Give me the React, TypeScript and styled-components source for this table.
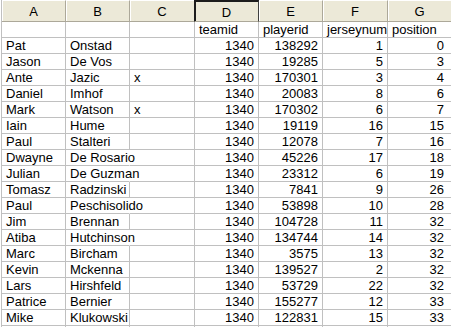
import React from 'react';
import styled, {createGlobalStyle, css} from 'styled-components';

type Align = 'left' | 'right';

interface IColumn {
    key: string,
    width: number,
    padRight: number
}

// widths measured off the grid lines, G sits a bit further in
const COLUMNS: IColumn[] = [
    {key: 'A', width: 64, padRight: 4},
    {key: 'B', width: 64, padRight: 4},
    {key: 'C', width: 65, padRight: 4},
    {key: 'D', width: 64, padRight: 4},
    {key: 'E', width: 64, padRight: 4},
    {key: 'F', width: 65, padRight: 4},
    {key: 'G', width: 64, padRight: 7},
];

const SELECTED_COLUMN = 'D';
const PAD_LEFT = 4;
const FONT = '13px "Liberation Sans", Arial, sans-serif';

const LABELS = ['', '', '', 'teamid', 'playerid', 'jerseynum', 'position'];

const ROWS: (string | number)[][] = [
    ['Pat', 'Onstad', '', 1340, 138292, 1, 0],
    ['Jason', 'De Vos', '', 1340, 19285, 5, 3],
    ['Ante', 'Jazic', 'x', 1340, 170301, 3, 4],
    ['Daniel', 'Imhof', '', 1340, 20083, 8, 6],
    ['Mark', 'Watson', 'x', 1340, 170302, 6, 7],
    ['Iain', 'Hume', '', 1340, 19119, 16, 15],
    ['Paul', 'Stalteri', '', 1340, 12078, 7, 16],
    ['Dwayne', 'De Rosario', '', 1340, 45226, 17, 18],
    ['Julian', 'De Guzman', '', 1340, 23312, 6, 19],
    ['Tomasz', 'Radzinski', '', 1340, 7841, 9, 26],
    ['Paul', 'Peschisolido', '', 1340, 53898, 10, 28],
    ['Jim', 'Brennan', '', 1340, 104728, 11, 32],
    ['Atiba', 'Hutchinson', '', 1340, 134744, 14, 32],
    ['Marc', 'Bircham', '', 1340, 3575, 13, 32],
    ['Kevin', 'Mckenna', '', 1340, 139527, 2, 32],
    ['Lars', 'Hirshfeld', '', 1340, 53729, 22, 32],
    ['Patrice', 'Bernier', '', 1340, 155277, 12, 33],
    ['Mike', 'Klukowski', '', 1340, 122831, 15, 33],
];

let measureCtx: CanvasRenderingContext2D | null = null

const textWidth = (text: string) => {
    if (!measureCtx) {
        measureCtx = document.createElement('canvas').getContext('2d')
    }
    if (!measureCtx) return text.length * 7
    measureCtx.font = FONT
    return measureCtx.measureText(text).width
}

// text spills over into the next cell when that one is empty, like excel
const spills = (row: (string | number)[], i: number) => {
    const value = row[i]
    if (typeof value !== 'string' || !value) return false
    const next = row[i + 1]
    if (next !== '' || i === row.length - 1) return false
    return textWidth(value) + PAD_LEFT > COLUMNS[i].width - 1
}

const App: React.FC = () => {
    const template = COLUMNS.map(c => `${c.width}px`).join(' ')

    const renderRow = (row: (string | number)[], r: string) => row.map((value, i) => {
        const col = COLUMNS[i]
        const align: Align = typeof value === 'number' ? 'right' : 'left'
        return <Cell key={`${r}-${col.key}`} $align={align} $padRight={col.padRight} $spill={spills(row, i)}>
            {value}
        </Cell>
    })

    return <>
        <GlobalStyle/>
        <Sheet style={{gridTemplateColumns: template}}>
            {COLUMNS.map(col => (
                <ColumnHeader key={col.key} $selected={col.key === SELECTED_COLUMN}>
                    {col.key}
                </ColumnHeader>
            ))}
            {renderRow(LABELS, 'label')}
            {ROWS.map((row, r) => renderRow(row, String(r)))}
            {renderRow(COLUMNS.map(() => ''), 'tail')}
        </Sheet>
    </>
}

export default App

const GlobalStyle = createGlobalStyle`
    html, body {
        margin: 0;
        padding: 0;
        background: #ffffff;
        overflow: hidden;
    }
    body {
        font-family: "Liberation Sans", Arial, sans-serif;
        font-size: 13px;
        color: #000000;
    }
`

const Sheet = styled.div`
    display: grid;
    grid-template-rows: 22px;
    grid-auto-rows: 16px;
    margin-left: 1px;
    border-left: 1px solid #c0c0c0;
    width: max-content;
`

const ColumnHeader = styled.div<{ $selected?: boolean }>`
    box-sizing: border-box;
    display: flex;
    align-items: center;
    justify-content: center;
    padding-top: 1px;
    background: #ece9d8;
    border-top: 1px solid #ffffff;
    border-right: 1px solid #aca899;
    border-bottom: 1px solid #aca899;
    box-shadow: inset 1px 0 0 #ffffff;
    font-size: 13px;
    color: #000000;

    ${({$selected}) => $selected && css`
        border-top: 2px solid #1c1c1c;
        border-right: 1px solid #404040;
        box-shadow: inset 1px 0 0 #1c1c1c;
        margin-left: -1px;
        border-left: 1px solid #1c1c1c;
    `}
`

const Cell = styled.div<{ $align: Align, $padRight: number, $spill?: boolean }>`
    box-sizing: border-box;
    padding: 1px ${({$padRight}) => $padRight}px 0 ${PAD_LEFT}px;
    border-right: 1px solid #c0c0c0;
    border-bottom: 1px solid #c0c0c0;
    line-height: 14px;
    white-space: nowrap;
    overflow: hidden;
    text-align: ${({$align}) => $align};

    ${({$spill}) => $spill && css`
        overflow: visible;
        border-right-color: transparent;
    `}
`
